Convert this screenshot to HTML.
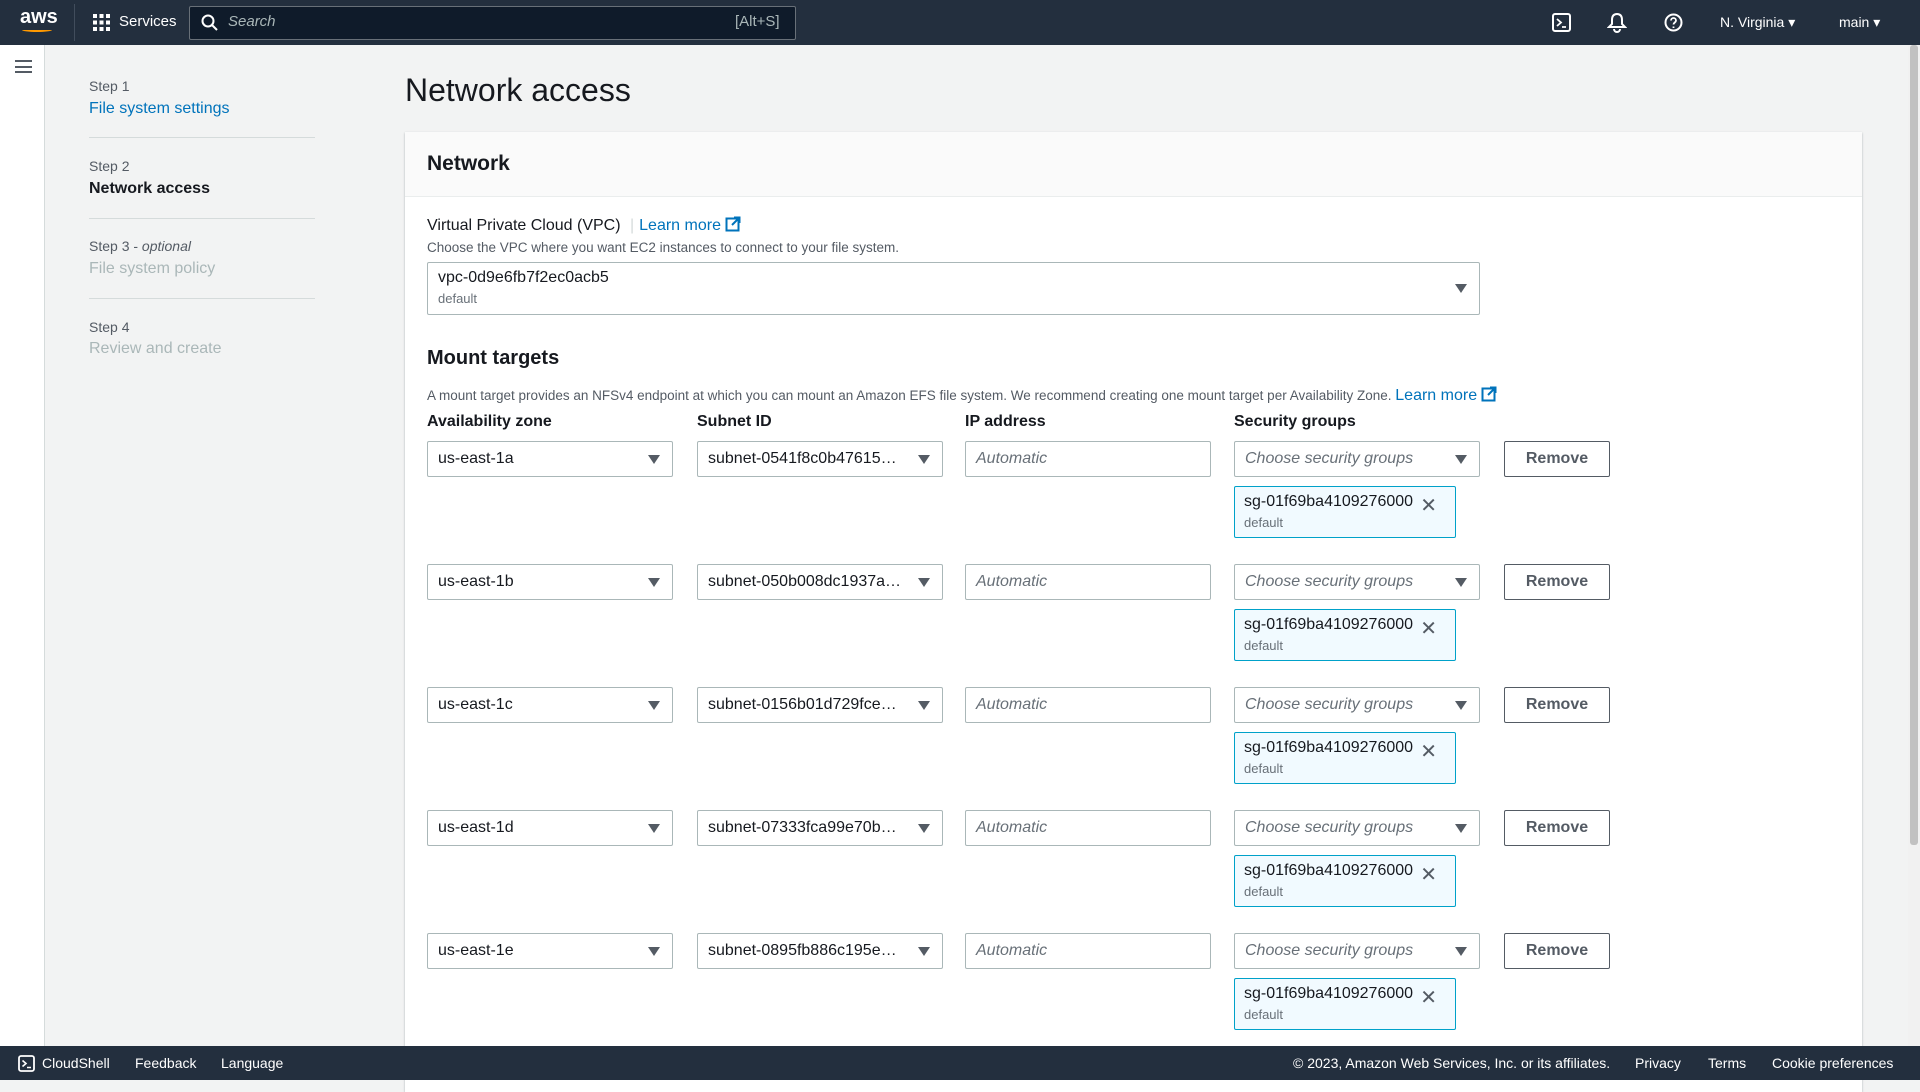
<!DOCTYPE html>
<html><head><meta charset="utf-8"><style>
*{box-sizing:border-box;margin:0;padding:0}
body{width:1920px;height:1080px;overflow:hidden;background:#f2f3f3;font-family:"Liberation Sans",sans-serif;color:#16191f;position:relative}
.top{position:absolute;left:0;top:0;width:1920px;height:45px;background:#232f3e;color:#fff}
.abs{position:absolute}
.nav{position:absolute;left:0;top:45px;width:45px;height:1001px;background:#fff;border-right:1px solid #d5dbdb}
.step{position:absolute;left:89px;font-size:14px;color:#545b64}
.sl{position:absolute;left:89px;font-size:16px}
.div{position:absolute;left:89px;width:226px;height:1px;background:#d5dbdb}
.panel{position:absolute;left:405px;top:132px;width:1457px;height:960px;background:#fff;box-shadow:0 1px 2px rgba(0,28,36,.3)}
.ph{height:65px;background:#fafafa;border-bottom:1px solid #eaeded;padding:20px 22px;font-size:21px;font-weight:bold}
.inp{position:absolute;height:36px;border:1px solid #aab7b8;border-radius:2px;background:#fff;font-size:16px;padding:8px 10px;white-space:nowrap;overflow:hidden}
.ph2{font-style:italic;color:#687078}
.arr{position:absolute;right:12px;top:13px;width:0;height:0;border-left:6px solid transparent;border-right:6px solid transparent;border-top:9px solid #545b64}
.btn{position:absolute;height:36px;width:106px;border:1px solid #545b64;border-radius:2px;background:#fff;font-size:16px;font-weight:bold;color:#545b64;text-align:center;line-height:34px}
.tok{position:absolute;width:222px;height:52px;background:#f1faff;border:1px solid #00a1c9;border-radius:2px;padding:6px 9px;font-size:16px}
.tok small{display:block;font-size:13px;color:#687078;margin-top:4px}
.x{position:absolute;right:18px;top:6px;font-size:20px;color:#545b64}
.lbl{position:absolute;font-size:16px;font-weight:bold}
a{color:#0073bb;text-decoration:none}
.foot{position:absolute;left:0;top:1046px;width:1920px;height:34px;background:#232f3e;color:#fff;font-size:14px}
.foot span{position:absolute;top:9px}
</style></head><body>
<div class="top">
 <div class="abs" style="left:20px;top:6px;font-size:20px;font-weight:bold">aws</div>
 <div class="abs" style="left:22px;top:28px;width:30px;height:4px;border-bottom:2px solid #ff9900;border-radius:0 0 50% 50%"></div>
 <div class="abs" style="left:74px;top:4px;width:1px;height:37px;background:#414d5c"></div>
 <svg class="abs" style="left:93px;top:14px" width="17" height="17"><g fill="#fff"><rect x="0" y="0" width="4" height="4"/><rect x="6.5" y="0" width="4" height="4"/><rect x="13" y="0" width="4" height="4"/><rect x="0" y="6.5" width="4" height="4"/><rect x="6.5" y="6.5" width="4" height="4"/><rect x="13" y="6.5" width="4" height="4"/><rect x="0" y="13" width="4" height="4"/><rect x="6.5" y="13" width="4" height="4"/><rect x="13" y="13" width="4" height="4"/></g></svg>
 <div class="abs" style="left:119px;top:13px;font-size:15px">Services</div>
 <div class="abs" style="left:189px;top:6px;width:607px;height:34px;background:#0f1b2a;border:1px solid #687078;border-radius:2px"></div>
 <svg class="abs" style="left:201px;top:14px" width="17" height="17"><circle cx="7" cy="7" r="5.5" stroke="#fff" stroke-width="2" fill="none"/><line x1="11" y1="11" x2="16" y2="16" stroke="#fff" stroke-width="2"/></svg>
 <div class="abs" style="left:228px;top:13px;font-size:15px;font-style:italic;color:#aab7b8">Search</div>
 <div class="abs" style="left:735px;top:13px;font-size:15px;color:#aab7b8">[Alt+S]</div>
 <svg class="abs" style="left:1552px;top:13px" width="19" height="19"><rect x="1" y="1" width="17" height="17" rx="2" stroke="#fff" stroke-width="2" fill="none"/><path d="M5 6l4 3.5-4 3.5M10 14h4" stroke="#fff" stroke-width="1.8" fill="none"/></svg>
 <svg class="abs" style="left:1607px;top:12px" width="20" height="21"><path d="M10 2c-4 0-5 3-5 6v4l-3 3h16l-3-3V8c0-3-1-6-5-6zM7 17a3 3 0 006 0" stroke="#fff" stroke-width="2" fill="none"/></svg>
 <svg class="abs" style="left:1664px;top:13px" width="19" height="19"><circle cx="9.5" cy="9.5" r="8" stroke="#fff" stroke-width="2" fill="none"/><path d="M7 7.5a2.5 2.5 0 115 0c0 2-2.5 2-2.5 4M9.5 13.5v1.5" stroke="#fff" stroke-width="1.8" fill="none"/></svg>
 <div class="abs" style="left:1720px;top:14px;font-size:14px">N. Virginia ▾</div>
 <div class="abs" style="left:1839px;top:14px;font-size:14px">main ▾</div>
</div>
<div class="nav"><div class="abs" style="left:15px;top:15px;width:17px;height:13px;border-top:2px solid #545b64;border-bottom:2px solid #545b64"><div style="margin-top:3.5px;height:2px;background:#545b64"></div></div></div>
<div class="abs" style="left:1908px;top:45px;width:12px;height:1001px;background:#f1f1f1"><div style="margin:0 2px;height:800px;background:#c1c1c1;border-radius:3px"></div></div>

<div class="step" style="top:78px">Step 1</div><div class="sl" style="top:100px;color:#0073bb">File system settings</div>
<div class="div" style="top:137px"></div>
<div class="step" style="top:158px">Step 2</div><div class="sl" style="top:180px;font-weight:bold">Network access</div>
<div class="div" style="top:218px"></div>
<div class="step" style="top:238px">Step 3 - <i>optional</i></div><div class="sl" style="top:260px;color:#aab7b8">File system policy</div>
<div class="div" style="top:298px"></div>
<div class="step" style="top:319px">Step 4</div><div class="sl" style="top:340px;color:#aab7b8">Review and create</div>

<div class="abs" style="left:405px;top:72px;font-size:32px">Network access</div>
<div class="panel"><div class="ph">Network</div></div>
<div class="abs" style="left:427px;top:216px;font-size:16px">Virtual Private Cloud (VPC) <span style="color:#d5dbdb;margin:0 5px">|</span><a>Learn more</a> <svg width="16" height="16" style="vertical-align:-2px"><rect x="1.5" y="2.5" width="12" height="12" stroke="#0073bb" stroke-width="2" fill="none"/><path d="M7 9l7-7M9 1.5h5.5V7" stroke="#0073bb" stroke-width="2" fill="none"/></svg></div>
<div class="abs" style="left:427px;top:240px;font-size:13.5px;color:#545b64">Choose the VPC where you want EC2 instances to connect to your file system.</div>
<div class="inp" style="left:427px;top:262px;width:1053px;height:53px;padding:6px 10px">vpc-0d9e6fb7f2ec0acb5<div style="font-size:13px;color:#687078;margin-top:4px">default</div><div class="arr" style="top:21px"></div></div>
<div class="abs" style="left:427px;top:347px;font-size:20px;font-weight:bold">Mount targets</div>
<div class="abs" style="left:427px;top:386px;font-size:13.5px;color:#545b64">A mount target provides an NFSv4 endpoint at which you can mount an Amazon EFS file system. We recommend creating one mount target per Availability Zone. <a style="font-size:16px">Learn more</a> <svg width="16" height="16" style="vertical-align:-2px"><rect x="1.5" y="2.5" width="12" height="12" stroke="#0073bb" stroke-width="2" fill="none"/><path d="M7 9l7-7M9 1.5h5.5V7" stroke="#0073bb" stroke-width="2" fill="none"/></svg></div>
<div class="lbl" style="left:427px;top:413px">Availability zone</div>
<div class="lbl" style="left:697px;top:413px">Subnet ID</div>
<div class="lbl" style="left:965px;top:413px">IP address</div>
<div class="lbl" style="left:1234px;top:413px">Security groups</div>

<div id="rows"></div>
<script>
var az=['us-east-1a','us-east-1b','us-east-1c','us-east-1d','us-east-1e'];
var sn=['subnet-0541f8c0b47615…','subnet-050b008dc1937a…','subnet-0156b01d729fce…','subnet-07333fca99e70b…','subnet-0895fb886c195e…'];
var h='';
for(var i=0;i<5;i++){var y=441+i*123;
h+='<div class="inp" style="left:427px;top:'+y+'px;width:246px">'+az[i]+'<div class="arr"></div></div>';
h+='<div class="inp" style="left:697px;top:'+y+'px;width:246px;padding-right:34px">'+sn[i]+'<div class="arr"></div></div>';
h+='<div class="inp ph2" style="left:965px;top:'+y+'px;width:246px">Automatic</div>';
h+='<div class="inp ph2" style="left:1234px;top:'+y+'px;width:246px">Choose security groups<div class="arr"></div></div>';
h+='<div class="btn" style="left:1504px;top:'+y+'px">Remove</div>';
h+='<div class="tok" style="left:1234px;top:'+(y+45)+'px">sg-01f69ba4109276000<span class="x">✕</span><small>default</small></div>';}
document.getElementById('rows').innerHTML=h;
</script>
<div class="foot">
 <svg class="abs" style="left:18px;top:9px" width="17" height="17"><rect x="1" y="1" width="15" height="15" rx="2" stroke="#fff" stroke-width="1.8" fill="none"/><path d="M4.5 5.5l3.5 3-3.5 3M9 12.5h4" stroke="#fff" stroke-width="1.6" fill="none"/></svg>
 <span style="left:42px">CloudShell</span><span style="left:135px">Feedback</span><span style="left:221px">Language</span>
 <span style="left:1293px">© 2023, Amazon Web Services, Inc. or its affiliates.</span><span style="left:1635px">Privacy</span><span style="left:1708px">Terms</span><span style="left:1772px">Cookie preferences</span>
</div>
</body></html>
